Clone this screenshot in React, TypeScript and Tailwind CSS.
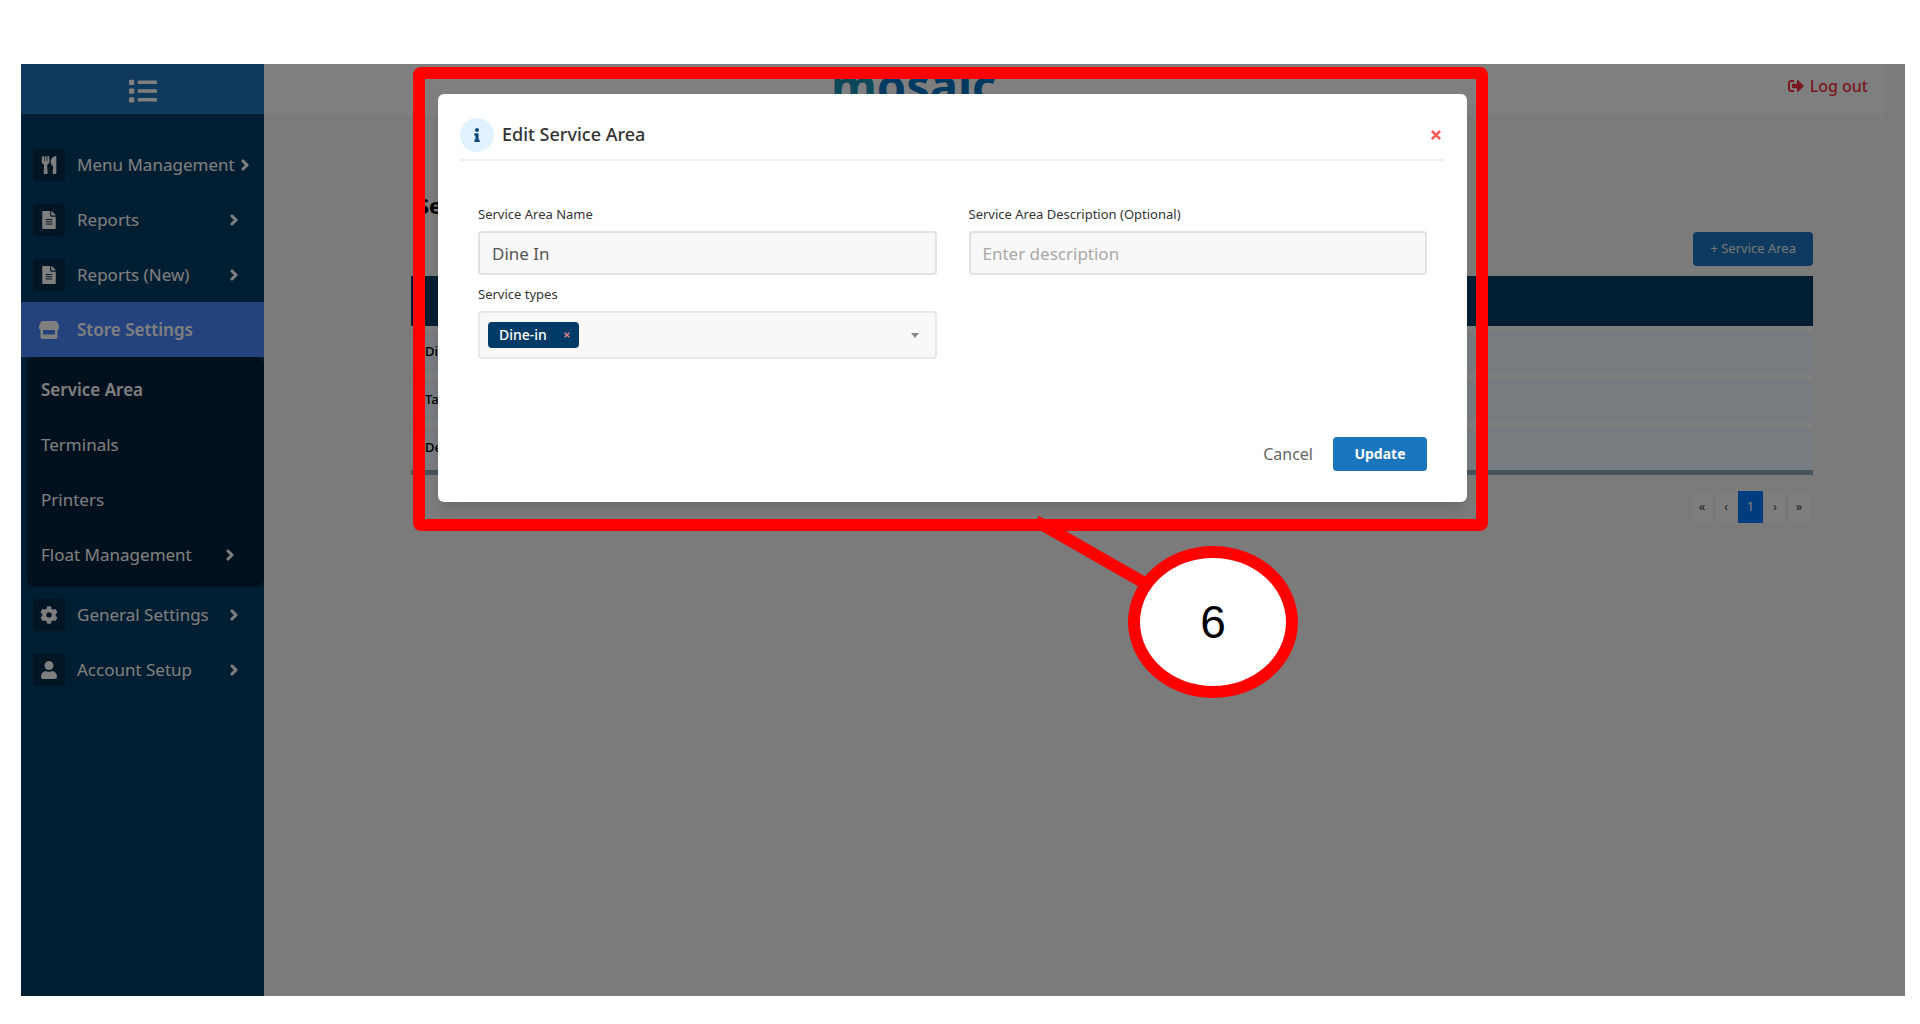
import { useState } from 'react';
import type { ReactNode } from 'react';
import { FaChevronRight, FaCog, FaFileAlt, FaInfo, FaList, FaSignOutAlt, FaTimes, FaUser, FaUtensils } from 'react-icons/fa';

type NavItem = { label: string; icon: ReactNode };

function StoreIcon() {
  return (
    <svg viewBox="0 0 20 18" className="h-[18px] w-5" fill="currentColor" aria-hidden="true">
      <path
        fillRule="evenodd"
        d="M3.500 0h13a2 2 0 0 1 1.800 1.200L20 5v1.500A2.500 2.500 0 0 1 18.500 9v7a2 2 0 0 1-2 2h-13a2 2 0 0 1-2-2V9A2.500 2.500 0 0 1 0 6.500V5l1.700-3.800A2 2 0 0 1 3.500 0zM4 9v4.500h12V9z"
      />
    </svg>
  );
}

const TOP_ITEMS: NavItem[] = [
  { label: 'Menu Management', icon: <FaUtensils /> },
  { label: 'Reports', icon: <FaFileAlt /> },
  { label: 'Reports (New)', icon: <FaFileAlt /> },
];

const SUB_ITEMS = ['Service Area', 'Terminals', 'Printers', 'Float Management'];

const BOTTOM_ITEMS: NavItem[] = [
  { label: 'General Settings', icon: <FaCog /> },
  { label: 'Account Setup', icon: <FaUser /> },
];

const AREAS = ['Dine In', 'Takeaway', 'Delivery'];
const PAGES = ['«', '‹', '1', '›', '»'];

function Chevron() {
  return <FaChevronRight className="size-3 shrink-0" stroke="currentColor" strokeWidth={48} />;
}

function NavLink({ label, icon }: NavItem) {
  return (
    <a href="#" className="flex h-[55px] items-center gap-1 pr-6 pl-3">
      <span className="flex size-8 shrink-0 items-center justify-center rounded bg-[#002c4a] text-[18px]">{icon}</span>
      <span className="ml-2 flex-1 whitespace-nowrap">{label}</span>
      <Chevron />
    </a>
  );
}

function Sidebar() {
  return (
    <aside className="w-[243px] shrink-0 bg-[#003c64] text-[17px] text-white">
      <button type="button" aria-label="Toggle menu" className="flex h-[50px] w-full items-center justify-center bg-[#1e74ba] pt-1">
        <FaList className="size-7" />
      </button>
      <nav className="pt-[23px]">
        {TOP_ITEMS.map((item) => (
          <NavLink key={item.label} {...item} />
        ))}
        <a href="#" className="flex h-[55px] items-center bg-[#4884f8] pl-3 font-semibold">
          <span className="flex size-8 items-center justify-center">
            <StoreIcon />
          </span>
          <span className="ml-3">Store Settings</span>
        </a>
        <div className="ml-1.5 rounded-lg bg-[#00223a] py-[5px]">
          {SUB_ITEMS.map((label, i) => (
            <a key={label} href="#" className={`flex h-[55px] items-center justify-between pr-7 pl-3.5 ${i === 0 ? 'font-semibold' : ''}`}>
              {label}
              {label === 'Float Management' && <Chevron />}
            </a>
          ))}
        </div>
        {BOTTOM_ITEMS.map((item) => (
          <NavLink key={item.label} {...item} />
        ))}
      </nav>
    </aside>
  );
}

function ServiceAreaPage() {
  return (
    <main className="flex-1 bg-[#f6f6f6] pr-[21px]">
      <header className="flex h-[51px] items-start justify-between bg-white pr-4 pl-[35%]">
        <div className="text-[47px] leading-[42px] font-bold text-[#0074c0]">
          <span className="text-[#1b8fb4]">m</span>osaic
        </div>
        <a href="#" className="flex items-center gap-1.5 pt-2.5 text-base font-medium text-[#f0323c]">
          <FaSignOutAlt />
          Log out
        </a>
      </header>
      <div className="pr-[71px] pl-[147px]">
        <h1 className="pt-[74px] pl-1.5 text-[22px] leading-8 font-bold text-black">Service Area</h1>
        <div className="mt-[11px] flex justify-end">
          <button type="button" className="h-[34px] rounded bg-[#1b75bc] px-[17px] text-[13px] text-[#eeeeee]">
            + Service Area
          </button>
        </div>
        <table className="mt-2.5 w-full border-b-[5px] border-[#8ca8b8] bg-white text-left text-[13px] text-black">
          <thead>
            <tr className="h-[52px] bg-[#003c64]">
              <th aria-label="Name" />
            </tr>
          </thead>
          <tbody>
            {AREAS.map((area) => (
              <tr key={area} className="h-12 border-t-[5px] border-white bg-[#f0f7ff]">
                <td className="pl-3.5 font-medium">{area}</td>
              </tr>
            ))}
          </tbody>
        </table>
        <nav aria-label="Pagination" className="mt-4 mr-0.5 flex justify-end text-[13px]">
          {PAGES.map((page) => (
            <button
              key={page}
              type="button"
              className={page === '1' ? 'h-8 w-[25px] bg-[#007bff] text-white' : 'h-8 w-6 border border-[#f2f2f2] bg-[#fcfcfc] text-[#444444]'}
            >
              {page}
            </button>
          ))}
        </nav>
      </div>
    </main>
  );
}

// Red marker drawn round the dialog, with its step number
function Callout() {
  return (
    <>
      <div className="pointer-events-none absolute -top-[27px] -right-[21px] -bottom-[29px] -left-[25px] rounded-lg border-12 border-[#ff0000]" />
      <svg viewBox="0 0 120 80" className="pointer-events-none absolute top-[422px] left-[594px] h-20 w-[120px]" aria-hidden="true">
        <path d="M4 5L116 69" stroke="#ff0000" strokeWidth="12" />
      </svg>
      <div className="absolute top-[452px] left-[690px] flex h-[152px] w-[170px] items-center justify-center rounded-[50%] border-12 border-[#ff0000] bg-white font-['Liberation_Sans',sans-serif] text-[46px] text-black">
        6
      </div>
    </>
  );
}

function EditServiceAreaDialog() {
  const [name, setName] = useState('Dine In');
  const [description, setDescription] = useState('');
  const [types, setTypes] = useState(['Dine-in']);

  return (
    <div className="relative w-[1029px]">
      <section role="dialog" aria-labelledby="dialog-title" className="rounded-md bg-white px-[22px] pt-6 pb-[31px] text-[#333333] shadow-lg">
        <div className="flex h-[43px] items-start border-b-2 border-[#eef2f4]">
          <span className="flex size-[34px] items-center justify-center rounded-full bg-[#e1f2ff] text-[#0b4778]">
            <FaInfo className="size-3.5" />
          </span>
          <h2 id="dialog-title" className="ml-2 text-[18px] leading-8 font-medium">
            Edit Service Area
          </h2>
          <button type="button" aria-label="Close" className="mt-2.5 mr-0.5 ml-auto text-[#ff5a5a]">
            <FaTimes className="size-3.5" />
          </button>
        </div>

        <form onSubmit={(e) => e.preventDefault()} className="px-[18px] pt-[43px]">
          <div className="grid grid-cols-2 gap-x-8 gap-y-[9px]">
            <div>
              <label htmlFor="area-name" className="block text-[13px] leading-5">
                Service Area Name
              </label>
              <input
                id="area-name"
                value={name}
                onChange={(e) => setName(e.target.value)}
                className="mt-[7px] h-11 w-full rounded border-2 border-[#e2e2e2] bg-[#f8f8f8] px-3 text-[17px] text-[#555555] outline-none"
              />
            </div>
            <div>
              <label htmlFor="area-description" className="block text-[13px] leading-5">
                Service Area Description (Optional)
              </label>
              <input
                id="area-description"
                value={description}
                onChange={(e) => setDescription(e.target.value)}
                placeholder="Enter description"
                className="mt-[7px] h-11 w-full rounded border-2 border-[#e2e2e2] bg-[#f8f8f8] px-3 text-[17px] outline-none placeholder:text-[#a8a8a8]"
              />
            </div>
            <div>
              <span id="types-label" className="block text-[13px] leading-5">
                Service types
              </span>
              <div
                role="group"
                aria-labelledby="types-label"
                className="mt-[7px] flex h-12 w-full items-center rounded border-2 border-[#e8e8e8] bg-[#f8f8f8] px-2"
              >
                {types.map((type) => (
                  <span key={type} className="flex h-[26px] items-center gap-4 rounded bg-[#003a66] pr-2 pl-[11px] text-sm font-medium text-white">
                    {type}
                    <button type="button" aria-label={`Remove ${type}`} onClick={() => setTypes(types.filter((t) => t !== type))}>
                      <FaTimes className="size-2 text-[#e08088]" />
                    </button>
                  </span>
                ))}
                <button type="button" aria-label="Show service types" className="ml-auto pr-2 text-[#888888]">
                  <svg viewBox="0 0 10 6" className="h-[5px] w-2" fill="currentColor" aria-hidden="true">
                    <path d="M0 0h10L5 6z" />
                  </svg>
                </button>
              </div>
            </div>
          </div>
          <div className="mt-[78px] flex items-center justify-end gap-5">
            <button type="button" className="text-base text-[#666666]">
              Cancel
            </button>
            <button type="submit" className="h-[34px] w-[94px] rounded bg-[#1b75bc] text-sm font-bold text-white">
              Update
            </button>
          </div>
        </form>
      </section>
      <Callout />
    </div>
  );
}

export default function App() {
  return (
    <div className="min-h-screen bg-white pt-16 pr-[15px] pb-7 pl-[21px] font-['Noto_Sans',sans-serif]">
      <div className="relative flex min-h-[932px]">
        <Sidebar />
        <ServiceAreaPage />
        <div className="absolute inset-0 flex items-start justify-center bg-black/50 pt-[30px] pr-[21px]">
          <EditServiceAreaDialog />
        </div>
      </div>
    </div>
  );
}
